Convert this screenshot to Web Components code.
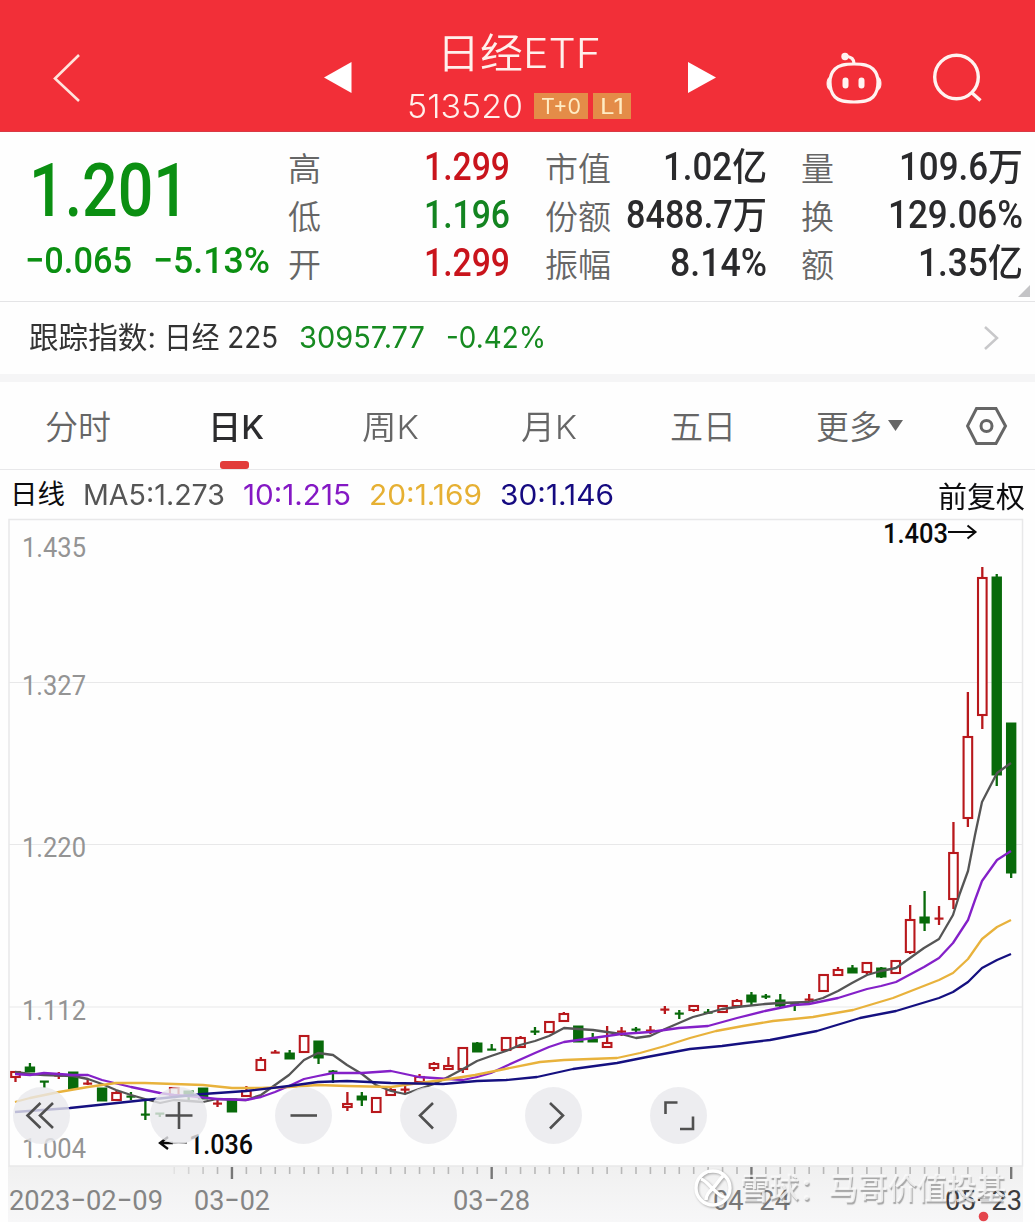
<!DOCTYPE html>
<html lang="zh-CN">
<head>
<meta charset="UTF-8">
<meta name="viewport" content="width=device-width, initial-scale=1.0">
<title>日经ETF 513520</title>
<style>
  body {
    margin: 0;
    background: #fefefe;
    font-family: Inter, "Noto Sans CJK SC", sans-serif;
    color: #333;
  }
</style>
</head>
<body>
<stock-page></stock-page>

<script>
  const DIN = 'Roboto, "Noto Sans CJK SC", sans-serif';

  class StockPage extends HTMLElement {
    connectedCallback() {
      this.attachShadow({ mode: 'open' });
      this.shadowRoot.innerHTML = `
        <style>
          :host {
            display: flex;
            flex-direction: column;
            width: 1035px;
            height: 1222px;
            overflow: hidden;
          }
        </style>
        <stock-header></stock-header>
        <quote-panel></quote-panel>
        <index-row></index-row>
        <period-tabs></period-tabs>
        <ma-legend></ma-legend>
        <k-chart></k-chart>
      `;
    }
  }

  class StockHeader extends HTMLElement {
    connectedCallback() {
      this.attachShadow({ mode: 'open' });
      this.shadowRoot.innerHTML = `
        <style>
          :host {
            display: grid;
            grid-template-columns: 324px 28px 1fr 28px 319px;
            height: 132px;
            background: #f22f38;
            color: #fff0ec;
            box-sizing: border-box;
            border-bottom: 1px solid #d93a45;
          }
          svg { display: block; overflow: visible; }
          .back { padding: 54px 0 0 53px; }
          .arrow { padding-top: 62px; }
          .title {
            display: flex;
            flex-direction: column;
            align-items: center;
            padding: 33px 3px 0 0;
          }
          .name { font-weight: 350; }
          .code {
            display: flex;
            align-items: center;
            margin-top: 15px;
            height: 34px;
            gap: 5px;
          }
          .code fit-text { margin-right: 6px; }
          .actions {
            display: flex;
            gap: 50px;
            padding: 52px 0 0 110px;
          }
        </style>
        <div class="back">
          <svg width="28" height="50" fill="none" stroke="#ffe4dc" stroke-width="2.6"><path d="M26 1 L2 24.5 L26 47"/></svg>
        </div>
        <div class="arrow"><svg width="28" height="31"><path fill="#fff" d="M0 15.5 L27.5 0 V31z"/></svg></div>
        <div class="title">
          <fit-text class="name" size="41" width="164">日经ETF</fit-text>
          <div class="code">
            <fit-text size="33" width="116" style="font-weight:350">513520</fit-text>
            <tag-badge width="40">T+0</tag-badge>
            <tag-badge width="24">L1</tag-badge>
          </div>
        </div>
        <div class="arrow"><svg width="28" height="31"><path fill="#fff" d="M0 0 L28 15.5 L0 31z"/></svg></div>
        <div class="actions">
          <svg width="57" height="52" fill="none" stroke="#fff3f0" stroke-width="3.2">
            <path d="M28 12c10 0 15 1 19 5c4 4 5 8 5 13s-1 11-5 15c-4 4-9 5-19 5s-15-1-19-5c-4-4-5-10-5-15s1-9 5-13c4-4 9-5 19-5z"/>
            <path d="M28 12c0-5-2-7-9-8"/>
            <circle cx="19" cy="4.500" r="3.700" fill="#fff3f0" stroke="none"/>
            <path d="M4 25c-4 1-4 12 0 13zM52 25c4 1 4 12 0 13z" fill="#fff3f0" stroke-width="1"/>
            <path d="M19.500 28.500v5M35.500 28.500v5" stroke-width="6" stroke-linecap="round"/>
          </svg>
          <svg width="50" height="52" fill="none" stroke="#fff3f0" stroke-width="3.400">
            <circle cx="23.500" cy="25" r="21.800"/>
            <path d="M38 40 L47.500 48.500"/>
          </svg>
        </div>
      `;
    }
  }

  class TagBadge extends HTMLElement {
    connectedCallback() {
      this.attachShadow({ mode: 'open' });
      this.shadowRoot.innerHTML = `
        <style>
          :host {
            display: flex;
            align-items: center;
            justify-content: center;
            height: 26px;
            padding: 0 7px;
            background: #e48c48;
            color: #ffecc4;
          }
        </style>
        <fit-text size="22" width="${this.getAttribute('width')}"><slot></slot></fit-text>
      `;
    }
  }

  class QuotePanel extends HTMLElement {
    connectedCallback() {
      this.attachShadow({ mode: 'open' });
      this.shadowRoot.innerHTML = `
        <style>
          :host {
            display: grid;
            grid-template-columns: 288px 222px 222px 222px;
            height: 170px;
            box-sizing: border-box;
            border-bottom: 1px solid #e4e4e6;
            padding-top: 11px;
            position: relative;
          }
          .last {
            font-family: ${DIN};
            font-weight: 500;
            color: #0b8f12;
            padding-left: 25px;
          }
          .price { margin: 11px 0 0 4px; }
          .change { display: flex; gap: 21px; margin-top: 14px; }
          .group {
            display: grid;
            grid-template-rows: repeat(3, 48px);
          }
          .second { margin: 0 0 0 35px; width: 222px; }
          .third { margin: 0 0 0 69px; width: 222px; }
          .fold { position: absolute; right: 5px; bottom: 4px; }
        </style>
        <div class="last">
          <fit-text class="price" size="74" width="160">1.201</fit-text>
          <div class="change">
            <fit-text size="37.500" width="107">−0.065</fit-text>
            <fit-text size="37.500" width="117">−5.13%</fit-text>
          </div>
        </div>
        <div class="group">
          <quote-item label="高" value="1.299" width="86" color="#c9141c"></quote-item>
          <quote-item label="低" value="1.196" width="86" color="#138420"></quote-item>
          <quote-item label="开" value="1.299" width="86" color="#c9141c"></quote-item>
        </div>
        <div class="group second">
          <quote-item label="市值" value="1.02亿" width="104"></quote-item>
          <quote-item label="份额" value="8488.7万" width="141"></quote-item>
          <quote-item label="振幅" value="8.14%" width="97"></quote-item>
        </div>
        <div class="group third">
          <quote-item label="量" value="109.6万" width="124"></quote-item>
          <quote-item label="换" value="129.06%" width="135"></quote-item>
          <quote-item label="额" value="1.35亿" width="105"></quote-item>
        </div>
        <svg class="fold" width="12" height="12"><path d="M12 0V12H0z" fill="#c4c4c6"/></svg>
      `;
    }
  }

  class QuoteItem extends HTMLElement {
    connectedCallback() {
      const label = this.getAttribute('label');
      this.attachShadow({ mode: 'open' });
      this.shadowRoot.innerHTML = `
        <style>
          :host {
            display: flex;
            justify-content: space-between;
            align-items: center;
            height: 48px;
          }
          .label { color: #666; font-weight: 350; margin-top: 5px; }
          .value {
            font-family: ${DIN};
            font-weight: 500;
            color: ${this.getAttribute('color') || '#2a2a2c'};
          }
        </style>
        <fit-text class="label" size="33" width="${label.length * 33}">${label}</fit-text>
        <fit-text class="value" size="38" width="${this.getAttribute('width')}">${this.getAttribute('value')}</fit-text>
      `;
    }
  }

  class IndexRow extends HTMLElement {
    connectedCallback() {
      this.attachShadow({ mode: 'open' });
      this.shadowRoot.innerHTML = `
        <style>
          :host {
            display: flex;
            align-items: center;
            height: 72px;
            padding: 0 36px 0 29px;
            border-bottom: 8px solid #f5f5f6;
          }
          .index { margin-left: 8px; }
          .up { color: #168a20; margin-left: 21px; }
          svg { margin-left: auto; }
        </style>
        <fit-text size="29.500" width="127">跟踪指数:</fit-text>
        <fit-text class="index" size="29.500" width="114">日经 225</fit-text>
        <fit-text class="up" size="29.500" width="126">30957.77</fit-text>
        <fit-text class="up" size="29.500" width="100">-0.42%</fit-text>
        <svg width="15" height="24" fill="none" stroke="#c8c8ca" stroke-width="2.500"><path d="M1 1 L13 12 L1 23"/></svg>
      `;
    }
  }

  class PeriodTabs extends HTMLElement {
    connectedCallback() {
      this.attachShadow({ mode: 'open' });
      this.shadowRoot.innerHTML = `
        <style>
          :host {
            display: grid;
            grid-template-columns: 163px 154px 159px 149px 146px 150px 42px;
            height: 87px;
            padding-left: 45px;
            border-bottom: 1px solid #e8e8ea;
            color: #666;
          }
          period-tab { justify-self: start; }
          svg { display: block; align-self: center; }
        </style>
        <period-tab width="66">分时</period-tab>
        <period-tab width="56" active>日K</period-tab>
        <period-tab width="57">周K</period-tab>
        <period-tab width="56">月K</period-tab>
        <period-tab width="66">五日</period-tab>
        <period-tab width="66">更多<svg slot="mark" width="15" height="11"><path d="M0 0H15L7.500 11z" fill="#666"/></svg></period-tab>
        <svg width="42" height="38" fill="none" stroke="#666" stroke-width="3">
          <path d="M10.500 1.500H30L39.500 19L30 36.500H10.500L1.500 19z"/>
          <circle cx="20.500" cy="19" r="5.500"/>
        </svg>
      `;
    }
  }

  class PeriodTab extends HTMLElement {
    connectedCallback() {
      const active = this.hasAttribute('active');
      this.attachShadow({ mode: 'open' });
      this.shadowRoot.innerHTML = `
        <style>
          :host {
            display: flex;
            align-items: center;
            gap: 6px;
            position: relative;
            font-weight: ${active ? 500 : 350};
            color: ${active ? '#2c2c2e' : '#666'};
          }
          fit-text { margin-top: 3px; }
          .bar {
            position: absolute;
            left: 50%;
            bottom: 0;
            width: 29px;
            height: 8px;
            margin-left: -16px;
            border-radius: 3px;
            background: #e23c3a;
          }
        </style>
        <fit-text size="33" width="${this.getAttribute('width')}"><slot></slot></fit-text>
        <slot name="mark"></slot>
        ${active ? '<span class="bar"></span>' : ''}
      `;
    }
  }

  class MaLegend extends HTMLElement {
    connectedCallback() {
      this.attachShadow({ mode: 'open' });
      this.shadowRoot.innerHTML = `
        <style>
          :host {
            display: flex;
            align-items: center;
            height: 49px;
            padding: 1px 10px 0 10px;
            box-sizing: border-box;
            gap: 18px;
          }
          .day, .adjust { color: #0c0c0e; }
          .adjust { margin: 4px 0 0 auto; }
        </style>
        <fit-text class="day" size="27.500" width="55">日线</fit-text>
        <fit-text size="28.500" width="142" style="color:#555">MA5:1.273</fit-text>
        <fit-text size="28.500" width="108" style="color:#8418c4">10:1.215</fit-text>
        <fit-text size="28.500" width="113" style="color:#e6b033">20:1.169</fit-text>
        <fit-text size="28.500" width="114" style="color:#150a80">30:1.146</fit-text>
        <fit-text class="adjust" size="29" width="87">前复权</fit-text>
      `;
    }
  }

  // type, high, body top, body bottom, low
  const CANDLES = [
    ['r',1071,1072,1077,1082], ['g',1063,1067,1072,1072], ['g',1081,1081,1082,1088], ['r',1072,1075,1076,1079],
    ['g',1072,1072,1089,1089], ['r',1080,1083,1084,1085], ['g',1088,1088,1101,1101], ['r',1091,1093,1100,1100],
    ['g',1092,1096,1097,1100], ['g',1101,1114,1115,1120], ['g',1113,1113,1114,1117], ['r',1087,1088,1095,1095],
    ['g',1091,1091,1095,1100], ['g',1088,1088,1099,1099], ['r',1100,1103,1104,1107], ['g',1099,1099,1112,1112],
    ['r',1086,1091,1096,1096], ['r',1057,1060,1070,1070], ['r',1050,1052,1053,1053], ['g',1050,1053,1059,1059],
    ['r',1035,1036,1052,1052], ['g',1041,1041,1058,1064], ['g',1070,1071,1072,1083], ['r',1092,1104,1107,1111],
    ['g',1092,1096,1100,1106], ['r',1098,1098,1112,1112], ['r',1087,1090,1095,1095], ['r',1086,1089,1090,1094],
    ['r',1074,1077,1082,1082], ['r',1062,1064,1068,1071], ['r',1057,1066,1069,1069], ['r',1047,1048,1069,1073],
    ['g',1042,1043,1052,1052], ['g',1044,1049,1050,1050], ['r',1037,1038,1050,1050], ['r',1036,1038,1047,1048],
    ['g',1027,1031,1032,1035], ['r',1021,1022,1032,1032], ['r',1012,1014,1021,1021], ['g',1026,1026,1042,1042],
    ['g',1033,1039,1042,1042], ['r',1026,1043,1047,1048], ['r',1027,1031,1032,1036], ['g',1027,1029,1030,1033],
    ['r',1026,1030,1031,1034], ['r',1006,1009,1010,1014], ['g',1010,1013,1014,1019], ['r',1006,1006,1010,1012],
    ['g',1009,1012,1013,1014], ['r',1005,1006,1012,1012], ['r',999,1001,1006,1006], ['g',992,995,1002,1005],
    ['g',994,996,997,999], ['g',994,1000,1006,1007], ['g',1003,1003,1004,1011], ['r',994,999,1000,1001],
    ['r',974,975,991,991], ['r',967,970,975,975], ['g',965,968,973,973], ['r',963,963,972,974],
    ['g',967,968,977,978], ['r',961,961,973,973], ['r',905,920,952,954], ['g',891,917,923,931],
    ['r',906,918,919,925], ['r',822,853,899,909], ['r',692,737,818,827], ['r',567,578,715,729],
    ['g',574,577,775,786], ['g',723,723,873,878]
  ];

  const MA5 = '15,1072 30,1074 44,1075 73,1076 88,1079 102,1084 116,1090 131,1095 145,1099 160,1103 174,1100 189,1101 203,1102 217,1099 246,1100 261,1095 275,1085 289,1075 304,1060 318,1053 333,1055 347,1065 362,1074 376,1085 391,1091 405,1094 419,1089 434,1084 448,1077 463,1069 477,1061 491,1056 506,1051 520,1045 535,1041 549,1036 564,1028 578,1029 593,1030 607,1032 621,1034 636,1038 650,1036 665,1029 679,1023 693,1017 708,1013 722,1009 737,1007 765,1004 780,1003 809,1002 823,998 838,991 852,983 867,975 881,971 896,968 910,958 924,948 939,939 953,915 960,893 968,871 975,835 982,802 997,773 1011,763';
  const MA10 = '15,1074 30,1075 44,1073 73,1075 88,1075 102,1080 131,1087 160,1093 174,1095 189,1096 217,1099 246,1100 261,1097 275,1092 289,1086 304,1079 318,1076 333,1073 362,1073 391,1071 405,1074 419,1077 463,1080 477,1077 491,1073 506,1066 535,1053 549,1047 564,1042 593,1038 621,1034 650,1032 679,1028 708,1026 737,1018 765,1011 794,1005 809,1004 838,998 867,989 881,986 896,982 924,967 939,958 953,943 968,920 975,900 982,881 997,860 1011,851';
  const MA20 = '15,1102 30,1098 59,1092 88,1087 116,1083 145,1083 174,1084 203,1085 232,1088 261,1088 289,1087 318,1085 347,1086 391,1087 419,1083 443,1080 475,1075 500,1070 540,1062 564,1060 590,1059 617,1058 640,1053 665,1046 690,1038 716,1031 743,1026 773,1021 813,1017 853,1010 893,998 939,980 953,973 968,959 982,939 997,927 1011,920';
  const MA30 = '15,1112 70,1108 145,1100 203,1094 232,1092 246,1091 289,1086 318,1082 347,1081 391,1083 443,1084 477,1081 506,1080 537,1077 573,1069 617,1063 647,1057 690,1049 722,1046 745,1043 770,1040 817,1031 860,1018 896,1011 939,998 953,992 968,982 982,968 997,960 1011,954';

  class KChart extends HTMLElement {
    connectedCallback() {
      this.attachShadow({ mode: 'open' });
      this.shadowRoot.innerHTML = `
        <style>
          :host { display: block; position: relative; height: 703px; }
          svg { display: block; overflow: visible; }
          text { font-family: ${DIN}; }
          .scale { font-size: 28.500px; fill: #949494; }
          .date { font-size: 28.500px; fill: #858585; }
          .peak { font-size: 28.500px; font-weight: 500; fill: #0a0a0a; }
          .grid { stroke: #e8e8e9; fill: none; }
          .ma { fill: none; stroke-width: 2.300; stroke-linejoin: round; }
          .tools {
            position: absolute;
            left: 13px;
            top: 568px;
            display: flex;
            gap: 68px;
          }
          .tools :first-child { margin-right: 12px; }
          water-mark { position: absolute; left: 694px; top: 649px; }
          .dot { position: absolute; left: 978px; top: 692px; }
        </style>
        <svg width="1035" height="703" viewBox="0 519 1035 703">
          <defs>
            <linearGradient id="axis" x2="0" y2="1"><stop stop-color="#f0f0f0"/><stop offset="1" stop-color="#f7f7f8"/></linearGradient>
          </defs>
          <rect x="8" y="1166" width="1015" height="56" fill="url(#axis)"/>
          <path class="grid" d="M9 682.500H1023M9 844.500H1023M9 1007H1023"/>
          <rect class="grid" x="9" y="519.500" width="1013.500" height="646.500" stroke-width="1.500"/>
          <g class="scale">
            ${this.label(22, 556.5, 64, '1.435')}
            ${this.label(22, 694.5, 64, '1.327')}
            ${this.label(22, 857, 64, '1.220')}
            ${this.label(22, 1019.5, 64, '1.112')}
            ${this.label(22, 1158, 64, '1.004')}
          </g>
          ${this.candles()}
          <polyline class="ma" stroke="#555" points="${MA5}"/>
          <polyline class="ma" stroke="#8420c8" points="${MA10}"/>
          <polyline class="ma" stroke="#e8b23c" points="${MA20}"/>
          <polyline class="ma" stroke="#151080" points="${MA30}"/>
          <g class="peak">
            ${this.label(883, 542.5, 65, '1.403')}
            ${this.label(189, 1153.5, 64, '1.036')}
          </g>
          <g fill="none" stroke="#0a0a0a" stroke-width="2">
            <path d="M948 532H975M967.500 525.500L975.500 532L967.500 538.500"/>
            <path d="M171 1143H187" stroke="#888"/>
            <path d="M173 1143H160M168 1137L160 1143L168 1149" stroke-width="2.300"/>
          </g>
          ${this.ticks()}
          <g class="date">
            ${this.label(9, 1209.5, 154, '2023−02−09')}
            ${this.label(194, 1209.5, 76, '03−02')}
            ${this.label(453, 1209.5, 77, '03−28')}
            <g fill="#777">${this.label(713, 1209.5, 77, '04−24')}</g>
            <g fill="#3c3c3e">${this.label(945, 1209.5, 77, '05−23')}</g>
          </g>
        </svg>
        <water-mark>雪球：马哥价值投基</water-mark>
        <svg class="dot" width="11" height="11"><circle cx="5.500" cy="5.500" r="4.800" fill="#e4454c"/></svg>
        <div class="tools">
          <chart-tool><path d="M27.500 16L14.500 28.500L27.500 41M40 16L27 28.500L40 41"/></chart-tool>
          <chart-tool><path d="M15.500 28.500H42.500M29 15V42"/></chart-tool>
          <chart-tool><path d="M15.500 28.500H42"/></chart-tool>
          <chart-tool><path d="M33 16L20 28.500L33 41.500"/></chart-tool>
          <chart-tool><path d="M25 16L38 28.500L25 41.500"/></chart-tool>
          <chart-tool><path d="M15.500 27V15.500H27.500M30 42H43V29.500"/></chart-tool>
        </div>
      `;
    }

    label(x, y, width, text) {
      return `<text x="${x}" y="${y}" textLength="${width}" lengthAdjust="spacingAndGlyphs">${text}</text>`;
    }

    x(i) {
      return 15.5 + i * 14.43;
    }

    candles() {
      return CANDLES.map(([type, high, top, bottom, low], i) => {
        const x = this.x(i);
        const color = type === 'r' ? '#b8181c' : '#086a0a';
        const flat = bottom - top < 2;
        const wick = `<path d="M${x} ${high}V${top}M${x} ${bottom}V${low}" stroke="${color}" stroke-width="2.3"/>`;
        if (flat) {
          return wick + `<rect x="${x - 4.5}" y="${top - 0.5}" width="9" height="2.2" fill="${color}"/>`;
        }
        if (type === 'g') {
          return wick + `<rect x="${x - 5.2}" y="${top - 0.5}" width="10.4" height="${bottom - top + 1}" fill="${color}"/>`;
        }
        return wick + `<rect x="${x - 4.3}" y="${top}" width="8.6" height="${bottom - top}" fill="#fff" stroke="${color}" stroke-width="2.1"/>`;
      }).join('');
    }

    ticks() {
      let out = '';
      for (let i = 11; i < 70; i++) {
        const major = (i - 15) % 18 === 0;
        out += `<path d="M${this.x(i)} 1167V${major ? 1179 : 1174}" stroke="${major ? '#777' : '#b8b8b8'}" stroke-width="${major ? 2.4 : 1.6}" opacity="${Math.min(1, (i - 10) / 4)}"/>`;
      }
      return out;
    }
  }

  class ChartTool extends HTMLElement {
    connectedCallback() {
      const icon = this.innerHTML;
      this.attachShadow({ mode: 'open' });
      this.shadowRoot.innerHTML = `
        <style>
          :host {
            display: block;
            width: 57px;
            height: 57px;
            border-radius: 50%;
            background: rgba(233, 233, 236, 0.8);
          }
          svg { display: block; }
        </style>
        <svg width="57" height="57" fill="none" stroke="#505050" stroke-width="2.6">${icon}</svg>
      `;
    }
  }

  class WaterMark extends HTMLElement {
    connectedCallback() {
      this.attachShadow({ mode: 'open' });
      this.shadowRoot.innerHTML = `
        <style>
          :host {
            display: flex;
            align-items: center;
            gap: 8px;
            height: 40px;
            font-weight: 500;
            color: rgba(250, 250, 250, 0.8);
            text-shadow: 1px 1.5px 1px rgba(90, 90, 90, 0.5);
          }
          svg { filter: drop-shadow(1px 1px 1px rgba(90, 90, 90, 0.5)); }
        </style>
        <svg width="38" height="38" fill="none" stroke="#fff" stroke-width="3.4">
          <circle cx="19" cy="19" r="17"/>
          <path d="M7 10C13 12 15 17 19 20S27 29 32 28M29 7C24 12 23 15 19 19S12 26 12 31"/>
        </svg>
        <fit-text size="30" width="266"><slot></slot></fit-text>
      `;
    }
  }

  // one line of text scaled horizontally to a given width
  class FitText extends HTMLElement {
    connectedCallback() {
      const size = this.getAttribute('size');
      const width = Number(this.getAttribute('width'));
      this.attachShadow({ mode: 'open' });
      this.shadowRoot.innerHTML = `
        <style>
          :host {
            display: block;
            flex: none;
            width: ${width}px;
            height: ${size}px;
            font-size: ${size}px;
            line-height: ${size}px;
          }
          span {
            display: inline-block;
            white-space: nowrap;
            transform-origin: 0 50%;
          }
        </style>
        <span><slot></slot></span>
      `;
      const span = this.shadowRoot.querySelector('span');
      const natural = span.getBoundingClientRect().width;
      if (natural) {
        span.style.transform = `scaleX(${width / natural})`;
      }
    }
  }

  customElements.define('stock-page', StockPage);
  customElements.define('stock-header', StockHeader);
  customElements.define('tag-badge', TagBadge);
  customElements.define('quote-panel', QuotePanel);
  customElements.define('quote-item', QuoteItem);
  customElements.define('index-row', IndexRow);
  customElements.define('period-tabs', PeriodTabs);
  customElements.define('period-tab', PeriodTab);
  customElements.define('ma-legend', MaLegend);
  customElements.define('k-chart', KChart);
  customElements.define('chart-tool', ChartTool);
  customElements.define('water-mark', WaterMark);
  customElements.define('fit-text', FitText);
</script>
</body>
</html>
